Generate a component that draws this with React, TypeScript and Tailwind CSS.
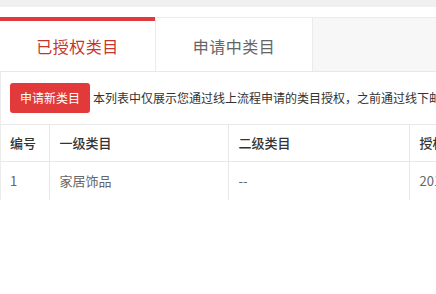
import * as React from "react";

const font = { fontFamily: '"Noto Sans CJK SC", "Noto Sans", sans-serif' };

const rows = [{ id: "1", first: "家居饰品", second: "--", date: "2019-03-01" }];

export default function App() {
  return (
    <div className="h-[294px] w-[436px] overflow-hidden bg-white" style={font}>
      <div className="h-[7px] bg-[#f0f0f0]" />
      <div className="h-[10px] bg-white" />

      {/* tabs */}
      <div className="flex h-[55px] border-b border-[#e8e8e8]">
        <div className="flex w-[155px] items-center justify-center border-t-4 border-[#e0393e] bg-white pb-px text-[16px] tracking-[0.5px] text-[#c7352f]">
          已授权类目
        </div>
        <div className="flex w-[157px] items-center justify-center border-l border-t border-[#ebebeb] bg-white pt-[3px] text-[16px] tracking-[0.5px] text-[#666]">
          申请中类目
        </div>
        <div className="flex-1 border-l border-t border-[#ebebeb] bg-[#f7f7f7]" />
      </div>

      <div className="border-l border-[#ececec]">
        <div className="flex items-center gap-[3px] whitespace-nowrap pl-[9px] pt-[11px]">
          <button
            type="button"
            className="h-[30px] w-[80px] shrink-0 rounded-[3px] bg-[#e2393b] text-[12px] text-white"
          >
            申请新类目
          </button>
          <span className="text-[12px] text-[#333]">
            本列表中仅展示您通过线上流程申请的类目授权，之前通过线下邮箱申请的类目授权请联系小二查询
          </span>
        </div>

        <table className="mt-[11px] w-[600px] table-fixed border-collapse text-[13px]">
          <colgroup>
            <col className="w-[48px]" />
            <col className="w-[179px]" />
            <col className="w-[181px]" />
            <col />
          </colgroup>
          <thead>
            <tr className="h-[37px] border-t border-[#e8e8e8] text-left text-[#333]">
              <th className="pl-[9px] font-medium">编号</th>
              <th className="border-l border-[#e8e8e8] pl-[10px] font-medium">一级类目</th>
              <th className="border-l border-[#e8e8e8] pl-[10px] font-medium">二级类目</th>
              <th className="border-l border-[#e8e8e8] pl-[10px] font-medium">授权时间</th>
            </tr>
          </thead>
          <tbody>
            {rows.map((r) => (
              <tr key={r.id} className="h-[38px] border-t border-[#e8e8e8] text-[#666]">
                <td className="pl-[9px]">{r.id}</td>
                <td className="border-l border-[#e8e8e8] pl-[10px]">{r.first}</td>
                <td className="border-l border-[#e8e8e8] pl-[10px]">{r.second}</td>
                <td className="border-l border-[#e8e8e8] pl-[10px]">{r.date}</td>
              </tr>
            ))}
          </tbody>
        </table>
      </div>
    </div>
  );
}
